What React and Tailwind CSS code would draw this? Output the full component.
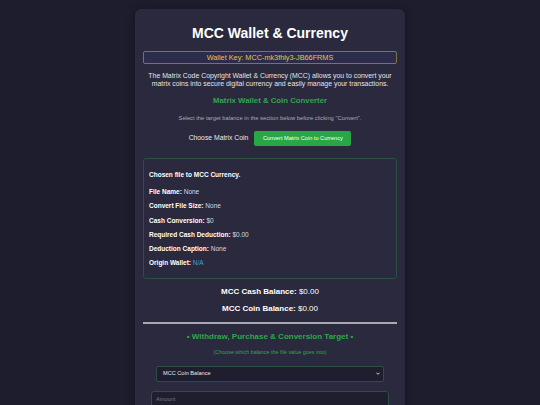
import React from 'react';

const details = [
  { label: 'File Name:', value: 'None' },
  { label: 'Convert File Size:', value: 'None' },
  { label: 'Cash Conversion:', value: '$0' },
  { label: 'Required Cash Deduction:', value: '$0.00' },
  { label: 'Deduction Caption:', value: 'None' },
  { label: 'Origin Wallet:', value: 'N/A', link: true },
];

export default function App() {
  return (
    <div className="h-[405px] w-[540px] overflow-hidden bg-[#1e1d2e] font-['Liberation_Sans',Arial,sans-serif] text-[#ececf1]">
      <div className="mx-auto mt-[9px] w-[270px] rounded-[6px] bg-[#2a293d] px-[8px] pt-[16px] pb-6 shadow-[0_0_8px_rgba(0,0,0,0.35)]">
        {/* Header */}
        <h1 className="text-center text-[14px] leading-[16px] font-bold text-white">MCC Wallet &amp; Currency</h1>

        <div className="mt-[10px] flex h-[13px] items-center justify-center rounded-[2px] border border-[#7f7450] bg-[#2d2c4a] text-[7.3px] leading-none text-[#e6c34a]">
          Wallet Key: MCC-mk3fhly3-JB66FRMS
        </div>

        <p className="mt-[8px] px-[4px] text-center text-[6.9px] leading-[8px] text-[#e4e4ea]">
          The Matrix Code Copyright Wallet &amp; Currency (MCC) allows you to convert your matrix coins into secure digital currency and easily manage your transactions.
        </p>

        <h2 className="mt-[8px] text-center text-[7.8px] leading-[10px] font-bold text-[#2fa64e]">Matrix Wallet &amp; Coin Converter</h2>

        <p className="mt-[8.5px] text-center text-[5.8px] leading-[7px] text-[#a9a9b4]">
          Select the target balance in the section below before clicking "Convert".
        </p>

        {/* Convert row */}
        <div className="mt-[9.5px] flex items-center justify-center gap-[6px]">
          <span className="text-[6.8px] leading-none text-[#e8e8ee]">Choose Matrix Coin</span>
          <button className="flex h-[15px] w-[97px] items-center justify-center rounded-[2px] bg-[#28a745] text-[5.6px] leading-none text-white">
            Convert Matrix Coin to Currency
          </button>
        </div>

        {/* Chosen file box */}
        <div className="mt-[12px] rounded-[3px] border border-[#2c4f45] px-[5px] pt-[12px] pb-[11px] text-[6.5px] leading-[8px]">
          <p className="font-bold text-white">Chosen file to MCC Currency.</p>
          <div className="mt-[9px] flex flex-col gap-[6.3px]">
            {details.map((d) => (
              <p key={d.label} className="text-[#d8d8e0]">
                <span className="font-bold text-white">{d.label}</span>{' '}
                <span className={d.link ? 'text-[#35a8d8]' : ''}>{d.value}</span>
              </p>
            ))}
          </div>
        </div>

        {/* Balances */}
        <p className="mt-[8px] text-center text-[8px] leading-[10px] text-white">
          <span className="font-bold">MCC Cash Balance:</span> $0.00
        </p>
        <p className="mt-[7px] text-center text-[8px] leading-[10px] text-white">
          <span className="font-bold">MCC Coin Balance:</span> $0.00
        </p>

        <div className="mt-[8px] h-[2px] bg-[#a9a9b3]" />

        <h3 className="mt-[7.5px] text-center text-[8px] leading-[10px] font-bold text-[#2fa64e]">
          • Withdraw, Purchase &amp; Conversion Target •
        </h3>
        <p className="mt-[7px] text-center text-[5.4px] leading-[7px] text-[#2fa64e]">
          (Choose which balance the file value goes into)
        </p>

        {/* Target select */}
        <div className="mx-[13px] mt-[10px] flex h-[16px] items-center justify-between rounded-[2px] border border-[#2c4f45] bg-[#1f1e2f] pr-[3px] pl-[6px] text-[5.6px] leading-none text-[#e8e8ee]">
          <span>MCC Coin Balance</span>
          <svg width="4" height="3" viewBox="0 0 10 6" fill="none" stroke="#e8e8ee" strokeWidth="2.2">
            <path d="M1 1l4 4 4-4" />
          </svg>
        </div>

        <div className="mx-[8px] mt-[9px] flex h-[18px] items-center rounded-[3px] border border-[#2c4f45] bg-[#1f1e2f] px-[4px] text-[5.6px] leading-none text-[#77778a]">
          Amount
        </div>
      </div>
    </div>
  );
}
